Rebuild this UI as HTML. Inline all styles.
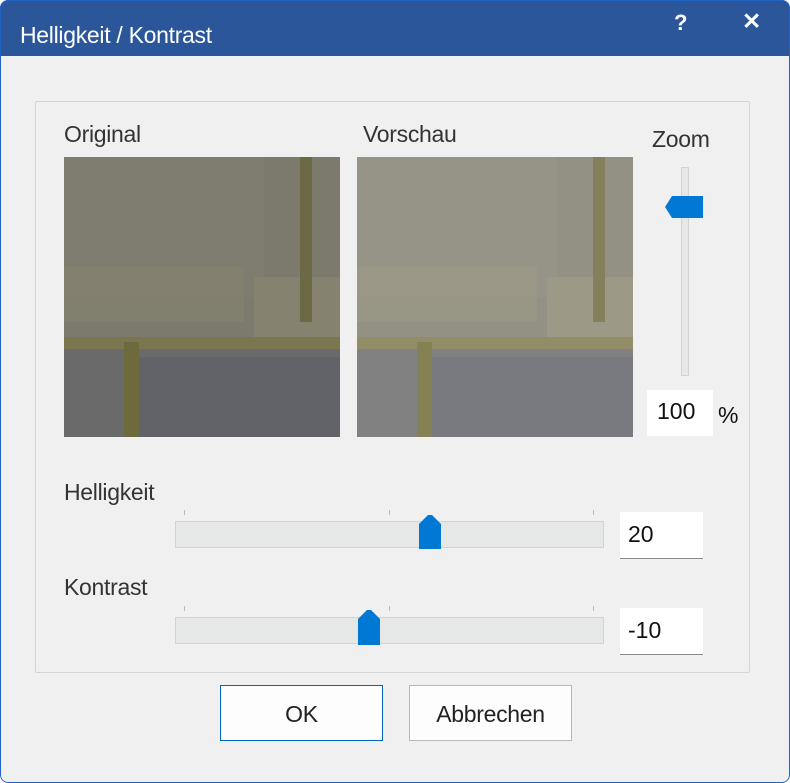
<!DOCTYPE html>
<html><head><meta charset="utf-8"><style>
*{margin:0;padding:0;box-sizing:border-box}
html,body{width:790px;height:783px;background:#fff;overflow:hidden;font-family:"Liberation Sans",sans-serif}
.win{position:absolute;left:0;top:0;width:790px;height:783px;border-radius:8px;background:#f0f0f0;overflow:hidden}
.edge{position:absolute;left:0;top:0;width:790px;height:783px;border:1px solid #1e63c4;border-radius:8px;pointer-events:none}
.title{position:absolute;left:0;top:0;width:790px;height:56px;background:#2b579a;color:#fff}
.t{position:absolute;left:20px;top:22px;font-size:23px;letter-spacing:-0.3px}
.q{position:absolute;left:674px;top:10px;font-size:22px;font-weight:bold}
.x{position:absolute;left:742px;top:8px;font-size:23px;font-weight:bold}
.panel{position:absolute;left:35px;top:101px;width:715px;height:572px;border:1px solid #d4d4d4;border-radius:2px;background:#f0f0f0}
.a{position:absolute;font-size:23px;color:#333;letter-spacing:-0.3px}
.img{position:absolute;top:157px;width:276px;height:280px}
.track{position:absolute;background:#e6e8e8;border:1px solid #d3d3d3}
.inp{position:absolute;background:#fff;border-bottom:1px solid #8a8a8a;font-size:23px;color:#111;padding-left:8px}
.tick{position:absolute;width:1px;height:5px;background:#bbb}
.btn{position:absolute;top:685px;width:163px;height:56px;background:#fdfdfd;border:1px solid #b8b8b8;font-size:23px;color:#222;text-align:center;line-height:56px;letter-spacing:-0.3px}
</style></head><body>
<div class="win">
<div class="title"><span class="t">Helligkeit / Kontrast</span><span class="q">?</span><span class="x">✕</span></div>
<div class="panel"></div>
<div class="a" style="left:64px;top:121px">Original</div>
<div class="a" style="left:363px;top:121px">Vorschau</div>
<div class="a" style="left:652px;top:126px">Zoom</div>
<svg class="img" style="left:64px" viewBox="0 0 276 280" preserveAspectRatio="none">
<rect width="276" height="280" fill="#7c7a6d"/>
<rect x="0" y="0" width="200" height="140" fill="#7f7c70"/>
<rect x="190" y="120" width="86" height="80" fill="#85836f"/>
<rect x="0" y="190" width="276" height="90" fill="#6a6a6a"/>
<rect x="60" y="200" width="216" height="80" fill="#626368"/>
<rect x="0" y="180" width="276" height="12" fill="#7a7650"/>
<rect x="60" y="185" width="15" height="95" fill="#6d6a3e"/>
<rect x="236" y="0" width="12" height="165" fill="#6c6a45"/>
<rect x="0" y="110" width="180" height="55" fill="#85836f" opacity=".6"/>
</svg>
<svg class="img" style="left:357px;filter:brightness(1.22) contrast(.82)" viewBox="0 0 276 280" preserveAspectRatio="none">
<rect width="276" height="280" fill="#7c7a6d"/>
<rect x="0" y="0" width="200" height="140" fill="#7f7c70"/>
<rect x="190" y="120" width="86" height="80" fill="#85836f"/>
<rect x="0" y="190" width="276" height="90" fill="#6a6a6a"/>
<rect x="60" y="200" width="216" height="80" fill="#626368"/>
<rect x="0" y="180" width="276" height="12" fill="#7a7650"/>
<rect x="60" y="185" width="15" height="95" fill="#6d6a3e"/>
<rect x="236" y="0" width="12" height="165" fill="#6c6a45"/>
<rect x="0" y="110" width="180" height="55" fill="#85836f" opacity=".6"/>
</svg>
<div class="track" style="left:681px;top:167px;width:8px;height:209px"></div>
<svg style="position:absolute;left:665px;top:196px" width="38" height="22"><path d="M0 11 L7 0 H38 V22 H7 Z" fill="#0078d4"/></svg>
<div class="inp" style="left:647px;top:390px;width:66px;height:46px;border-bottom:none;line-height:42px;padding-left:10px">100</div>
<div class="a" style="left:718px;top:402px;color:#111">%</div>

<div class="a" style="left:64px;top:479px">Helligkeit</div>
<div class="tick" style="left:184px;top:510px"></div><div class="tick" style="left:389px;top:510px"></div><div class="tick" style="left:593px;top:510px"></div>
<div class="track" style="left:175px;top:521px;width:429px;height:27px"></div>
<svg style="position:absolute;left:419px;top:515px" width="22" height="34"><path d="M0 9 L9 0 H13 L22 9 V34 H0 Z" fill="#0078d4"/></svg>
<div class="inp" style="left:620px;top:512px;width:83px;height:47px;line-height:44px">20</div>

<div class="a" style="left:64px;top:574px">Kontrast</div>
<div class="tick" style="left:184px;top:606px"></div><div class="tick" style="left:389px;top:606px"></div><div class="tick" style="left:593px;top:606px"></div>
<div class="track" style="left:175px;top:617px;width:429px;height:27px"></div>
<svg style="position:absolute;left:358px;top:610px" width="22" height="35"><path d="M0 9 L9 0 H13 L22 9 V35 H0 Z" fill="#0078d4"/></svg>
<div class="inp" style="left:620px;top:608px;width:83px;height:47px;line-height:44px">-10</div>

<div class="btn" style="left:220px;border:1px solid #0067c0">OK</div>
<div class="btn" style="left:409px">Abbrechen</div>
<div class="edge"></div>
</div>
</body></html>
